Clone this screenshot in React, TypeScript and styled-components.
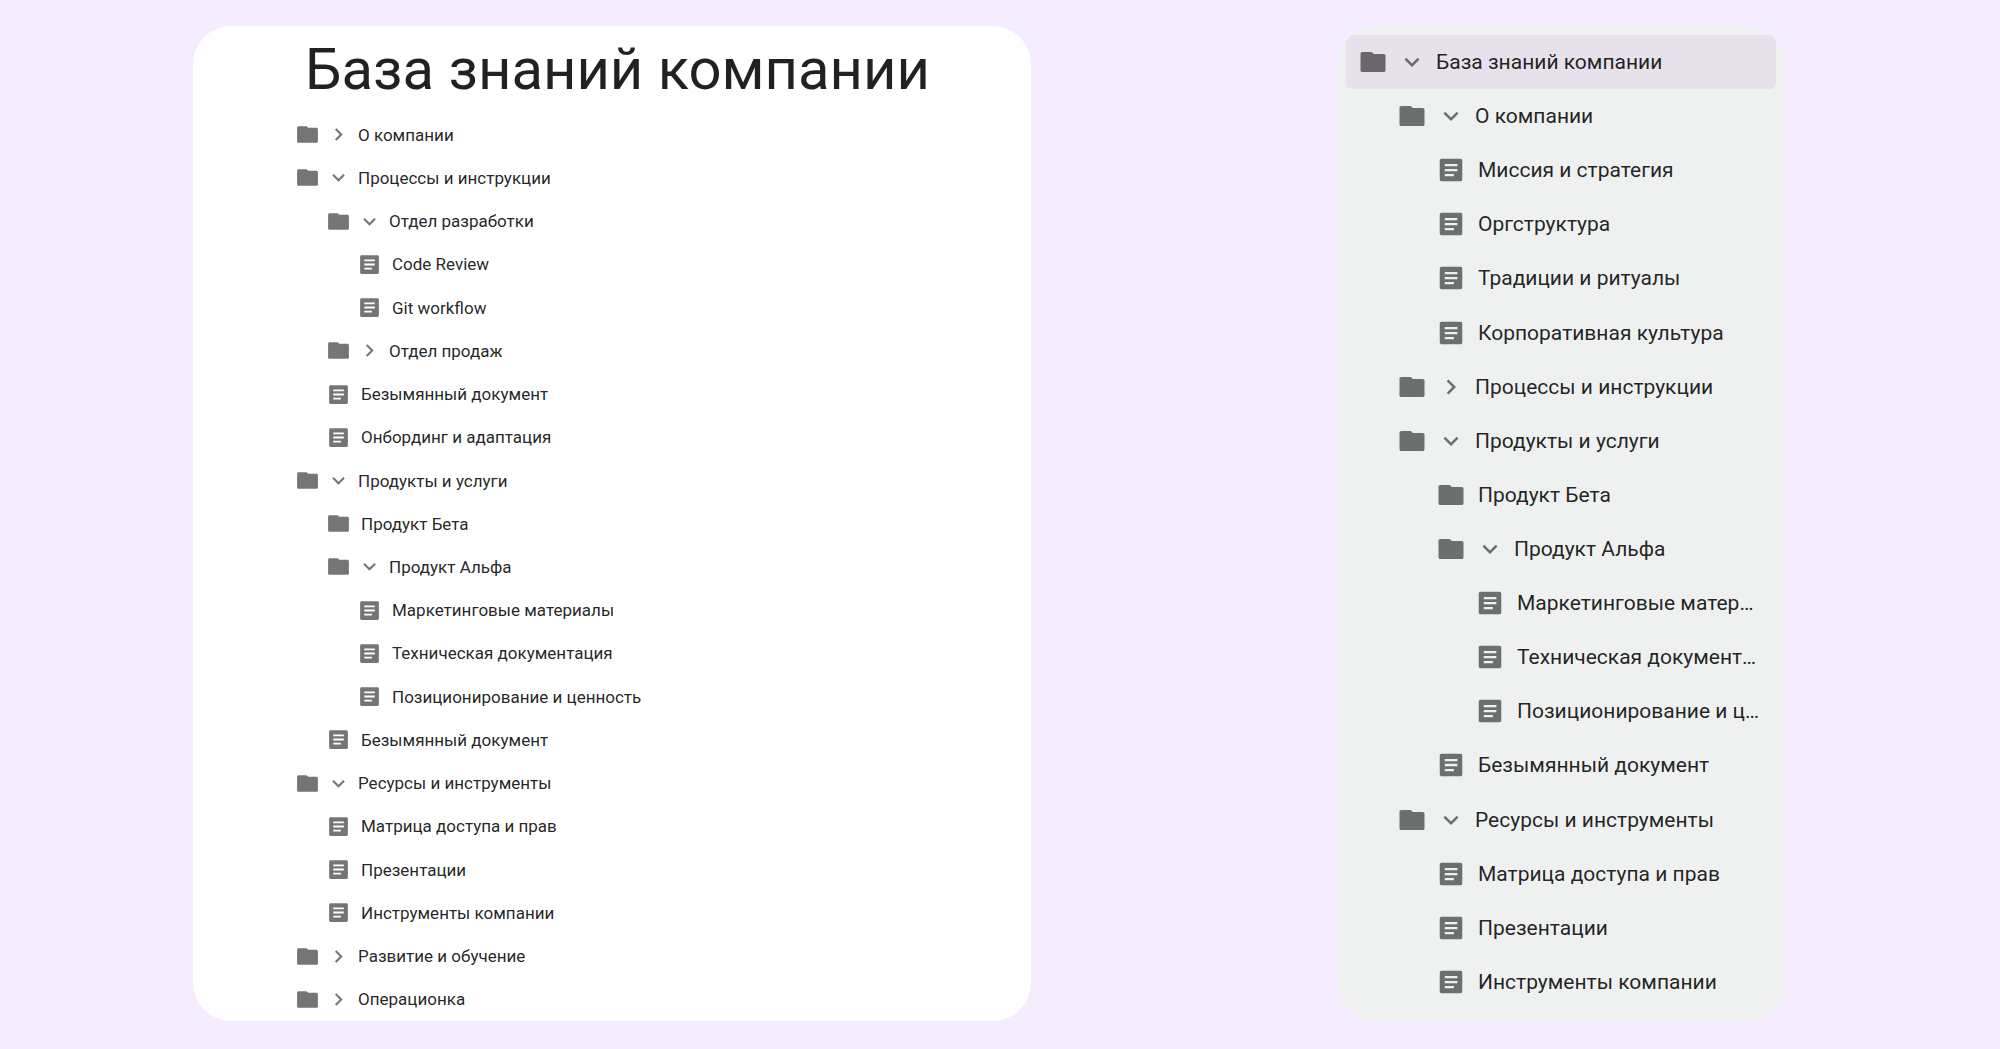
import React, { useState } from "react";
import styled, { createGlobalStyle } from "styled-components";

const GlobalStyle = createGlobalStyle`
  *, *::before, *::after { box-sizing: border-box; }
  body {
    margin: 0;
    background: #f5ecff;
    color: rgba(0, 0, 0, 0.87);
    font-family: Roboto, "Noto Sans", sans-serif;
  }
`;

type Size = "regular" | "large";

const metrics = {
  regular: { icon: 25, step: 31, font: 17, gap: 6, label: 7, leaf: 10 },
  large: { icon: 30, step: 39, font: 21, gap: 9, label: 9, leaf: 12 },
};

const Page = styled.div`
  min-height: 100vh;
  padding: 26px 0 28px;
  display: grid;
  grid-template-columns: 193fr minmax(min-content, 838fr) 307fr 446fr 216fr;
`;

const Article = styled.main`
  grid-column: 2;
  display: flex;
  flex-direction: column;
  padding-left: 102px;
  border-radius: 38px;
  background: #fff;
  overflow: hidden;
`;

const Title = styled.h1`
  margin: 0;
  padding-left: 10px;
  font-size: 58px;
  font-weight: 400;
  line-height: 87px;
  white-space: nowrap;
`;

const Sidebar = styled.nav`
  grid-column: 4;
  display: flex;
  flex-direction: column;
  min-width: 0;
  padding: 9px 8px 12px;
  border-radius: 38px;
  background: #eef1f0;
  overflow: hidden;
`;

const List = styled.ul`
  flex: 1;
  display: grid;
  grid-auto-rows: 1fr;
  margin: 0;
  padding: 0;
  list-style: none;
`;

const Row = styled.li<{ $size: Size; $level: number; $active?: boolean }>`
  display: flex;
  align-items: center;
  min-width: 0;
  padding-right: 16px;
  padding-left: ${(p) => (p.$size === "large" ? 12 : 0) + p.$level * metrics[p.$size].step}px;
  border-radius: 6px;
  background: ${(p) => (p.$active ? "#e7e1eb" : "transparent")};
`;

const Icon = styled.svg<{ $size: Size }>`
  display: block;
  flex: none;
  width: ${(p) => metrics[p.$size].icon}px;
  height: ${(p) => metrics[p.$size].icon}px;
  fill: rgba(0, 0, 0, 0.54);
`;

const Toggle = styled.button<{ $size: Size }>`
  flex: none;
  margin: 0 0 0 ${(p) => metrics[p.$size].gap}px;
  padding: 0;
  border: 0;
  background: none;
  cursor: pointer;
`;

const Label = styled.a<{ $size: Size; $leaf: boolean }>`
  min-width: 0;
  margin-left: ${(p) => (p.$leaf ? metrics[p.$size].leaf : metrics[p.$size].label)}px;
  overflow: hidden;
  color: inherit;
  font-size: ${(p) => metrics[p.$size].font}px;
  line-height: 32px;
  text-decoration: none;
  text-overflow: ellipsis;
  white-space: nowrap;
`;

const paths = {
  folder:
    "M3.5 4H10.4c.4 0 .7.1 1 .4L12.8 5.6H20.5c.9 0 1.5.6 1.5 1.5V18.5c0 .9-.6 1.5-1.5 1.5h-17c-.9 0-1.5-.6-1.5-1.5V5.500C2 4.600 2.600 4 3.500 4z",
  doc: "M19.600 3H4.400C3.600 3 3 3.600 3 4.400v15.200c0 .8.600 1.400 1.400 1.400h15.200c.8 0 1.400-.600 1.400-1.400V4.400c0-.8-.600-1.400-1.400-1.400zM14.300 16.900H7v-1.800h7.300v1.800zm2.800-4H7v-1.800h10.100v1.800zm0-4H7V7.100h10.100v1.800z",
  down: "M7.41 8.59 12 13.17l4.59-4.58L18 10l-6 6-6-6z",
  right: "M8.59 16.59 13.17 12 8.59 7.41 10 6l6 6-6 6z",
};

type Item = { level: number; kind: "folder" | "doc"; text: string; open?: boolean };

const f = (level: number, text: string, open?: boolean): Item => ({ level, kind: "folder", text, open });
const d = (level: number, text: string): Item => ({ level, kind: "doc", text });

const contents: Item[] = [
  f(0, "О компании", false),
  f(0, "Процессы и инструкции", true),
  f(1, "Отдел разработки", true),
  d(2, "Code Review"),
  d(2, "Git workflow"),
  f(1, "Отдел продаж", false),
  d(1, "Безымянный документ"),
  d(1, "Онбординг и адаптация"),
  f(0, "Продукты и услуги", true),
  f(1, "Продукт Бета"),
  f(1, "Продукт Альфа", true),
  d(2, "Маркетинговые материалы"),
  d(2, "Техническая документация"),
  d(2, "Позиционирование и ценность"),
  d(1, "Безымянный документ"),
  f(0, "Ресурсы и инструменты", true),
  d(1, "Матрица доступа и прав"),
  d(1, "Презентации"),
  d(1, "Инструменты компании"),
  f(0, "Развитие и обучение", false),
  f(0, "Операционка", false),
];

const navigation: Item[] = [
  f(0, "База знаний компании", true),
  f(1, "О компании", true),
  d(2, "Миссия и стратегия"),
  d(2, "Оргструктура"),
  d(2, "Традиции и ритуалы"),
  d(2, "Корпоративная культура"),
  f(1, "Процессы и инструкции", false),
  f(1, "Продукты и услуги", true),
  f(2, "Продукт Бета"),
  f(2, "Продукт Альфа", true),
  d(3, "Маркетинговые материалы"),
  d(3, "Техническая документация"),
  d(3, "Позиционирование и ценность"),
  d(2, "Безымянный документ"),
  f(1, "Ресурсы и инструменты", true),
  d(2, "Матрица доступа и прав"),
  d(2, "Презентации"),
  d(2, "Инструменты компании"),
];

function Tree({ items, size, active }: { items: Item[]; size: Size; active?: number }) {
  const [open, setOpen] = useState(items.map((item) => item.open));
  const toggle = (index: number) => setOpen(open.map((value, i) => (i === index ? !value : value)));

  let hiddenBelow = Infinity;
  return (
    <List>
      {items.map((item, i) => {
        if (item.level > hiddenBelow) return null;
        hiddenBelow = open[i] === false ? item.level : Infinity;
        const leaf = open[i] === undefined;
        return (
          <Row key={i} $size={size} $level={item.level} $active={i === active}>
            <Icon $size={size} viewBox="0 0 24 24" aria-hidden="true">
              <path d={paths[item.kind]} />
            </Icon>
            {!leaf && (
              <Toggle
                $size={size}
                type="button"
                aria-label={item.text}
                aria-expanded={open[i]}
                onClick={() => toggle(i)}
              >
                <Icon $size={size} viewBox="0 0 24 24" aria-hidden="true">
                  <path d={open[i] ? paths.down : paths.right} />
                </Icon>
              </Toggle>
            )}
            <Label href="#" $size={size} $leaf={leaf}>
              {item.text}
            </Label>
          </Row>
        );
      })}
    </List>
  );
}

export default function App() {
  return (
    <>
      <GlobalStyle />
      <Page>
        <Article>
          <Title>База знаний компании</Title>
          <Tree items={contents} size="regular" />
        </Article>
        <Sidebar>
          <Tree items={navigation} size="large" active={0} />
        </Sidebar>
      </Page>
    </>
  );
}
